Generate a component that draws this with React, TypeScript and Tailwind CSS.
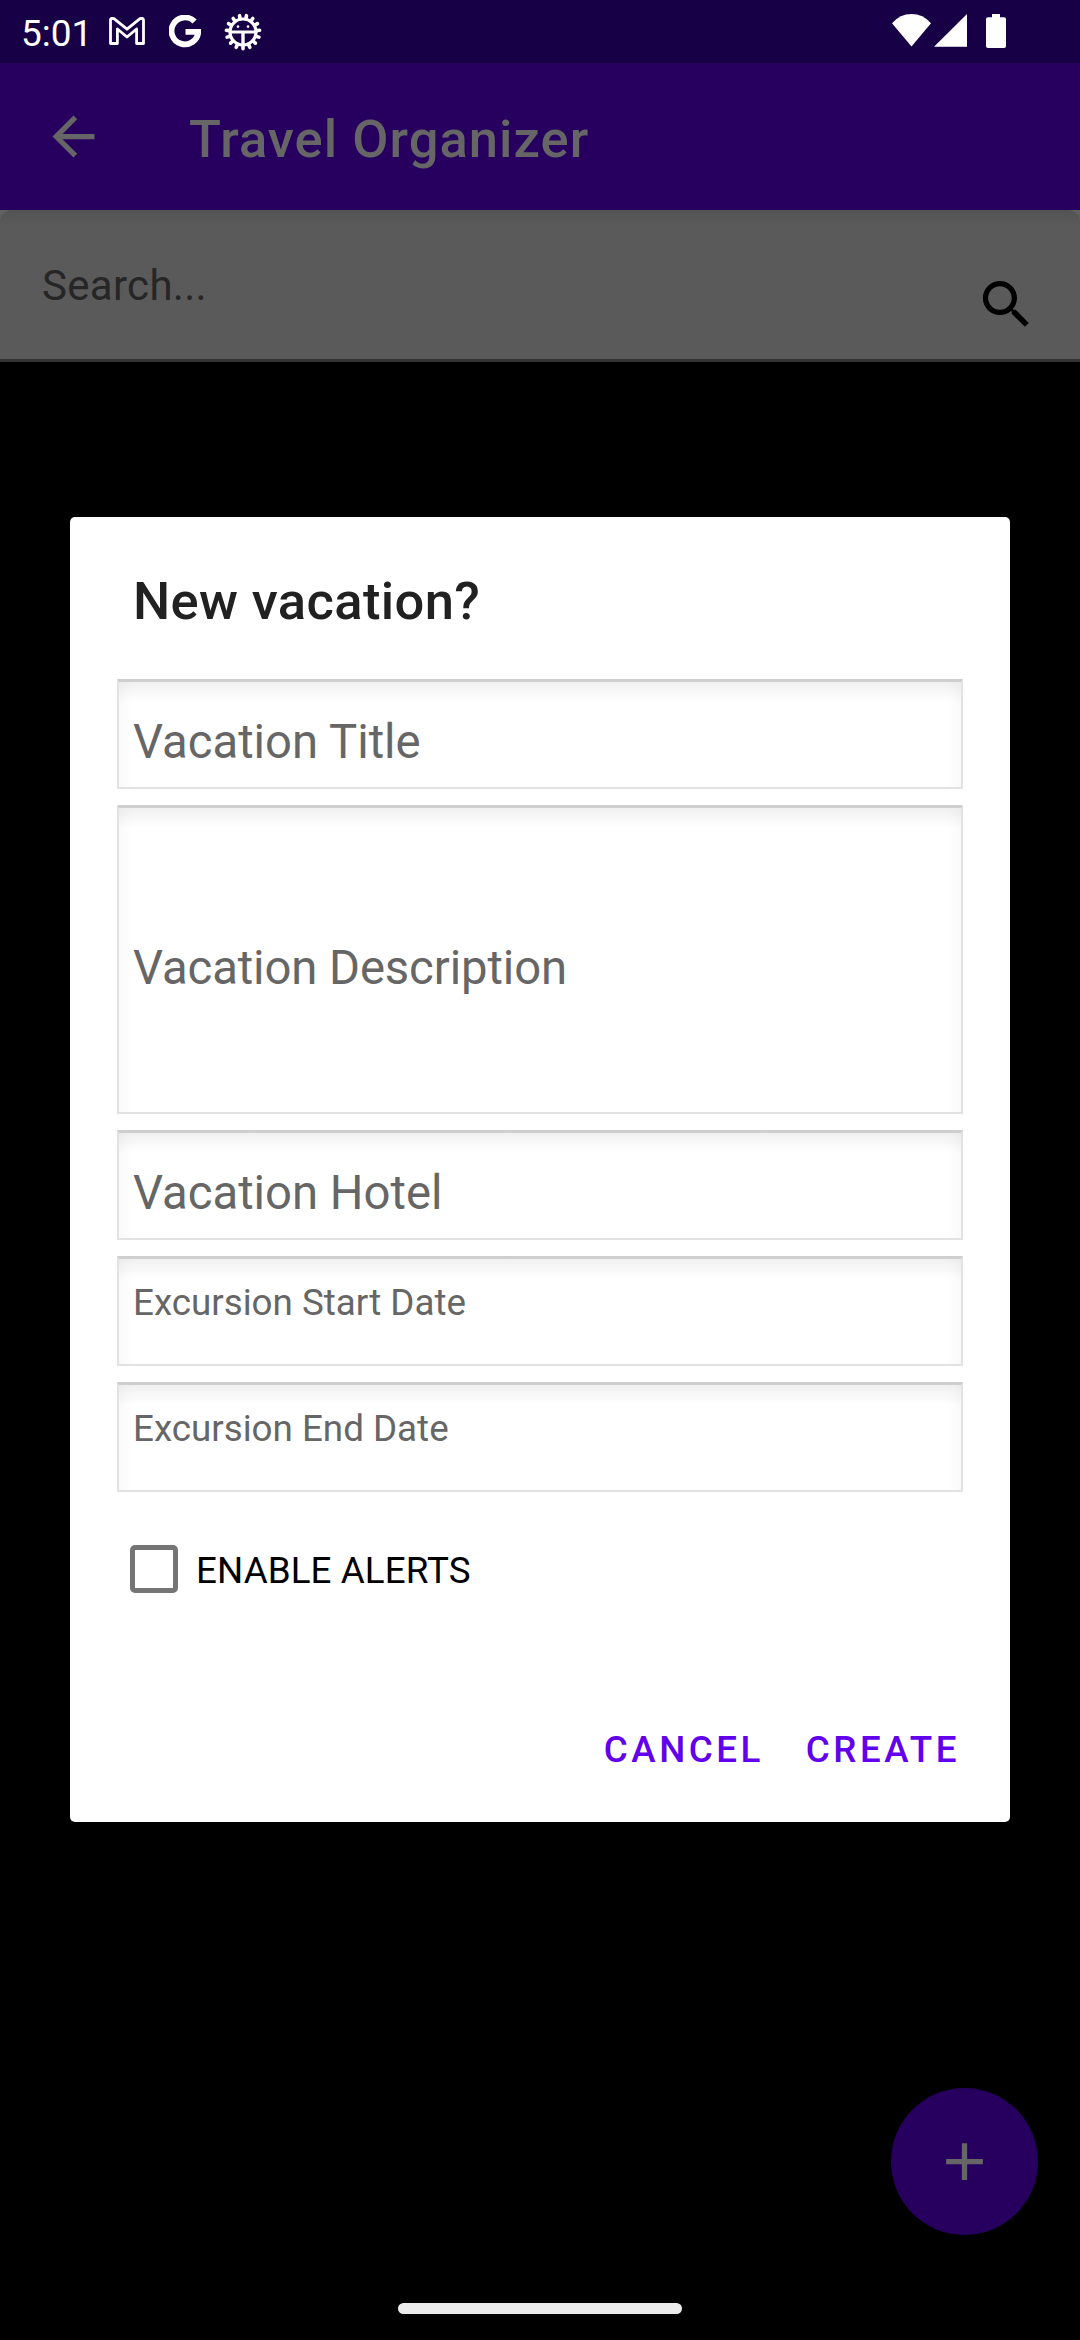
import React from "react";

const ARROW = "M20 11H7.83l5.59-5.59L12 4l-8 8 8 8 1.41-1.41L7.83 13H20v-2z";
const SEARCH =
  "M15.5 14h-.79l-.28-.27C15.41 12.59 16 11.11 16 9.5 16 5.91 13.09 3 9.5 3S3 5.91 3 9.5 5.91 16 9.5 16c1.61 0 3.09-.59 4.23-1.57l.27.28v.79l5 4.99L20.49 19l-4.99-5zm-6 0C7.01 14 5 11.99 5 9.5S7.01 5 9.5 5 14 7.01 14 9.5 11.99 14 9.5 14z";
const PLUS = "M19 13h-6v6h-2v-6H5v-2h6V5h2v6h6v2z";

function Icon({ d, className }: { d: string; className: string }) {
  return (
    <svg viewBox="0 0 24 24" className={`h-[63px] w-[63px] shrink-0 ${className}`} fill="currentColor">
      <path d={d} />
    </svg>
  );
}

function BugIcon() {
  const teeth = Array.from({ length: 15 }, (_, i) => (i * 24 + 12) * (Math.PI / 180));
  return (
    <svg viewBox="-19 -19 38 38" className="mt-[12.5px] ml-[23px] h-[38px] w-[38px] shrink-0" fill="none" stroke="white">
      <circle r="13" strokeWidth="3.2" />
      {teeth.map((a) => (
        <line
          key={a}
          x1={13.5 * Math.sin(a)}
          y1={-13.5 * Math.cos(a)}
          x2={16.7 * Math.sin(a)}
          y2={-16.7 * Math.cos(a)}
          strokeWidth="3.6"
          strokeLinecap="round"
        />
      ))}
      <path d="M-13 0H13" strokeWidth="3" />
      <path d="M0 0V14" strokeWidth="3.4" />
      <circle cx="-5" cy="-5.4" r="1.3" fill="white" strokeWidth="0" />
      <circle cx="5" cy="-5.4" r="1.3" fill="white" strokeWidth="0" />
    </svg>
  );
}

function StatusBar() {
  return (
    <div className="flex h-[63px] items-start bg-[#180046] pl-[21px] text-white">
      <span className="mt-[13px] w-[67px] text-[37px] leading-[42px]">5:01</span>
      <svg viewBox="0 0 36 28" className="mt-[17px] ml-[21px] h-[28px] w-[36px]" fill="none" stroke="white" strokeWidth="2.8" strokeLinejoin="round">
        <path d="M1.5 26.5V3.2Q1.5 1.3 3.4 1.3L5 1.6L18 12.2L31 1.6L32.6 1.3Q34.5 1.3 34.5 3.2V26.5H27.6V12L18 20L8.4 12V26.5Z" />
      </svg>
      <svg viewBox="0 0 32 33" className="mt-[15px] ml-[24px] h-[33px] w-[32px]" fill="none" stroke="white" strokeWidth="5.8">
        <path d="M25.6 6.6A13.4 13.4 0 1 0 29.3 16.8H16.5" />
      </svg>
      <BugIcon />
      <svg viewBox="0 0 39 33" className="mt-[14px] ml-auto h-[33px] w-[39px]" fill="white">
        <path d="M0 9.2Q8 0 19.5 0T39 9.2L19.5 32.6Z" />
      </svg>
      <svg viewBox="0 0 33 33" className="mt-[14px] ml-[3px] h-[33px] w-[33px]" fill="white">
        <path d="M33 0V32.7H0Z" />
      </svg>
      <svg viewBox="0 0 20 34" className="mt-[14px] mr-[74px] ml-[19px] h-[34px] w-[20px]" fill="white">
        <path d="M6 0H14V3.3H18Q20 3.3 20 5.3V32Q20 34 18 34H2Q0 34 0 32V5.3Q0 3.3 2 3.3H6Z" />
      </svg>
    </div>
  );
}

function Field({ label, className }: { label: string; className: string }) {
  return (
    <div className={`flex w-[846px] border-2 border-t-[3px] border-[#e2e2e2] border-t-[#cfcfcf] bg-white ${className}`}>
      <div className="flex w-full bg-[linear-gradient(to_bottom,rgba(0,0,0,0.06),transparent_20px),linear-gradient(to_right,rgba(0,0,0,0.025),transparent_14px),linear-gradient(to_left,rgba(0,0,0,0.025),transparent_14px)] pl-[14px] text-[#666]">
        <span className="self-center whitespace-nowrap">{label}</span>
      </div>
    </div>
  );
}

export default function App() {
  return (
    <div className="relative flex h-[2340px] w-[1080px] flex-col overflow-hidden bg-black font-['Roboto',sans-serif]">
      <StatusBar />
      <header className="flex h-[147px] items-center bg-[#27005f] pl-[42px] text-[#666]">
        <Icon d={ARROW} className="" />
        <h1 className="mt-[5px] ml-[84px] text-[52.5px] leading-[60px] font-medium tracking-[1.05px]">Travel Organizer</h1>
      </header>
      <div className="h-[152px] border-b-[3px] border-[#333] bg-[#606060]">
        <div className="flex h-full items-start justify-between rounded-t-[12px] bg-[#5a5a5a] bg-[linear-gradient(to_bottom,#535353,#5a5a5a_16px)] px-[42px]">
          <span className="mt-[52px] text-[42px] leading-[48px] tracking-[0.3px] text-[#262626]">Search...</span>
          <Icon d={SEARCH} className="mt-[63px] text-black" />
        </div>
      </div>

      <section className="mt-[155px] ml-[70px] flex h-[1305px] w-[940px] flex-col rounded-[5px] bg-white pl-[47px]">
        <h2 className="mt-[54px] ml-4 text-[52.5px] leading-[60px] font-medium tracking-[0.36px] text-[#212121]">New vacation?</h2>
        <div className="mt-[48px] flex flex-col gap-4">
          <Field label="Vacation Title" className="h-[110px] text-[47.25px] leading-[56px] [&_span]:mt-[14px]" />
          <Field label="Vacation Description" className="h-[309px] text-[47.25px] leading-[56px] tracking-[-0.1px] [&_span]:mt-4" />
          <Field label="Vacation Hotel" className="h-[110px] text-[47.25px] leading-[56px] [&_span]:mt-[14px]" />
          <Field label="Excursion Start Date" className="h-[110px] text-[36.75px] leading-[44px] [&_span]:mb-[18px]" />
          <Field label="Excursion End Date" className="h-[110px] text-[36.75px] leading-[44px] [&_span]:mb-[18px]" />
        </div>
        <label className="mt-[53px] ml-[13px] flex h-12 items-center">
          <span className="h-12 w-12 rounded-[5px] border-[5px] border-[#757575]" />
          <span className="mt-[3px] ml-[18px] text-[36.75px] leading-[44px] tracking-[0.1px] text-black">ENABLE ALERTS</span>
        </label>
        <div className="mt-[135px] mr-[50px] flex justify-end gap-[42px] text-[36.75px] leading-[44px] font-medium tracking-[3.5px] text-[#6200ee]">
          <button>CANCEL</button>
          <button>CREATE</button>
        </div>
      </section>

      <button className="mt-[266px] mr-[42px] flex h-[147px] w-[147px] items-center justify-center self-end rounded-full bg-[#27005f] text-[#666]">
        <Icon d={PLUS} className="" />
      </button>
      <div className="mt-[68px] h-[11px] w-[284px] self-center rounded-full bg-[#ececec]" />
    </div>
  );
}
